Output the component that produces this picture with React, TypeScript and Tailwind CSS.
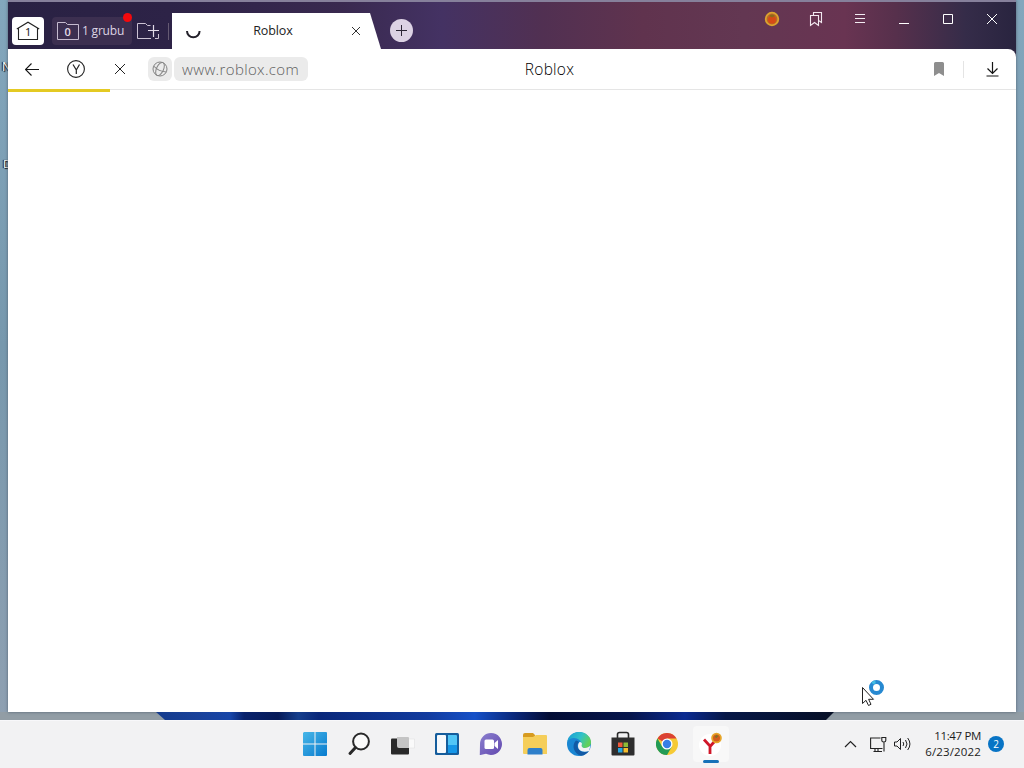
import React from "react";

const sans = "font-['Open_Sans','Noto_Sans',sans-serif]";

const TabStrip: React.FC = () => {
  return (
    <div className="flex h-[49px] w-full border-t-2 border-[#86809b] bg-[linear-gradient(90deg,#292143_0%,#2d2347_16%,#39294f_33%,#443263_43%,#513052_53%,#60334e_63%,#633752_73%,#693452_83%,#57304c_88%,#352c49_95%,#29243f_100%)]">
      <div className="flex pt-[15px] pl-1">
        <button className="flex h-7 w-8 items-center justify-center rounded bg-white">
          <svg className="-mt-px" width="24" height="20" viewBox="0 0 24 20" fill="none" stroke="#222" strokeWidth="1.1">
            <path d="M.8 8 12 1.2 23.2 8M2.5 7v11.5h19V7" />
            <text x="9" y="14.5" fill="#222" stroke="none" fontSize="11" fontFamily="Noto Sans, sans-serif">1</text>
          </svg>
        </button>
        <button className="relative ml-2 flex h-7 w-20 items-center rounded bg-[#3c2f50] pl-[5px] text-[12px] text-[#dcd4e4]">
          <svg width="22" height="18" viewBox="0 0 22 18" fill="none" stroke="#c5bbcf">
            <path d="M.5 17.5V.5h8l2 2h11v15z" />
            <text x="7.5" y="13.5" fill="#e4dde9" stroke="none" fontSize="11" fontWeight="600" fontFamily="Open Sans, sans-serif">0</text>
          </svg>
          <span className="ml-[3px] whitespace-nowrap tracking-[-0.2px]">1 grubu</span>
          <span className="absolute -top-[4px] right-0 size-[9px] rounded-full bg-[#f4090d]" />
        </button>
        <button className="ml-[5px] flex h-7 w-6 items-center">
          <svg width="23" height="18" viewBox="0 0 23 18" fill="none" stroke="#cbc2d3">
            <path d="M14 16.5H.5v-15h8l2 2h3M21.5 12v4.5H18" />
            <path d="M16.5 3v12M11 8.5h11" stroke="#e2dbe8" strokeWidth="1.2" />
          </svg>
        </button>
        <span className="mt-[6px] ml-[7px] h-[17px] w-px bg-[#655a73]" />
      </div>

      <div className="mt-[11px] ml-[3px] flex h-9 w-[209px] items-center bg-white pl-[13px] text-[#222] [clip-path:polygon(0_0,198px_0,209px_100%,0_100%)]">
        <svg width="17" height="17" viewBox="0 0 17 17" fill="none" stroke="#24212b" strokeWidth="2">
          <path d="M2 8a6.3 6.3 0 0 0 12.6 0" />
        </svg>
        <span className="w-[127px] pl-[15px] pt-px text-center text-[12.5px] tracking-[-0.1px]">Roblox</span>
        <svg className="ml-[22px]" width="10" height="10" viewBox="0 0 10 10" stroke="#333">
          <path d="m1 1 8 8M9 1 1 9" />
        </svg>
      </div>
      <button className="mt-[17px] ml-[9px] flex size-[23px] items-center justify-center rounded-full bg-[#dcd2e4]">
        <svg width="11" height="11" viewBox="0 0 11 11" stroke="#2b2535">
          <path d="M5.5 0v11M0 5.5h11" />
        </svg>
      </button>

      <div className="ml-auto flex h-[34px] pr-[2px] text-white [&>span]:flex [&>span]:w-11 [&>span]:items-center [&>span]:justify-center">
        <span>
          <svg width="16" height="16" viewBox="0 0 16 16">
            <circle cx="8" cy="8" r="6.3" fill="#b8692a" stroke="#dca32e" strokeWidth="1.8" />
            <circle cx="8" cy="8.7" r="3.9" fill="#d64a15" />
            <path d="M5 5c2-2 4-2 6 0L8 6.5z" fill="#8a6b18" />
          </svg>
        </span>
        <span>
          <svg width="14" height="16" viewBox="0 0 14 16" fill="none" stroke="#f2e9f0">
            <path d="M4.5 4.5v-3h8v10L10 9.8M1.5 4.5h8v10l-4-3-4 3z" strokeWidth="1.1" />
          </svg>
        </span>
        <span>
          <svg width="10" height="10" viewBox="0 0 10 10" stroke="#f3ebf2">
            <path d="M0 .5h10M0 4.5h10M0 8.5h10" />
          </svg>
        </span>
        <span>
          <svg width="10" height="10" viewBox="0 0 10 10" stroke="#fff">
            <path d="M0 9.5h10" />
          </svg>
        </span>
        <span>
          <svg width="10" height="10" viewBox="0 0 10 10" fill="none" stroke="#fff">
            <path d="M.5.5h9v9h-9z" />
          </svg>
        </span>
        <span>
          <svg width="10" height="10" viewBox="0 0 10 10" stroke="#fff">
            <path d="m0 0 10 10m0-10L0 10" />
          </svg>
        </span>
      </div>
    </div>
  );
};

const Toolbar: React.FC = () => {
  return (
    <div className="bg-[#2b2540]">
      <div className="flex h-[41px] items-center rounded-tr-lg border-b border-[#e5e5e5] bg-white">
        <div className="flex w-[504px] items-center pl-[2px]">
          <button className="flex w-11 justify-center">
            <svg width="14" height="13" viewBox="0 0 14 13" fill="none" stroke="#151515" strokeWidth="1.1">
              <path d="m6.5.5-6 6 6 6M.5 6.5H14" />
            </svg>
          </button>
          <button className="flex w-11 justify-center">
            <svg width="18" height="18" viewBox="0 0 18 18" fill="none" stroke="#222">
              <circle cx="9" cy="9" r="8.4" strokeWidth="1.1" />
              <path d="m6 4.500 3.300 5.500v4M12.500 4.500 9.300 10" strokeWidth="1.2" />
            </svg>
          </button>
          <button className="flex w-11 justify-center">
            <svg width="10" height="10" viewBox="0 0 10 10" stroke="#222">
              <path d="m0 0 10 10m0-10L0 10" />
            </svg>
          </button>
          <span className="ml-[6px] flex size-6 items-center justify-center rounded-md bg-[#ebebeb]">
            <svg width="16" height="16" viewBox="0 0 16 16" fill="none" stroke="#858585">
              <circle cx="8" cy="8" r="7" />
              <g transform="rotate(25 8 8)">
                <ellipse cx="8" cy="8" rx="3.5" ry="7" />
                <path d="M1 8q7 3 14 0" />
              </g>
            </svg>
          </span>
          <span className="ml-[2px] flex h-6 w-[134px] items-center rounded-md bg-[#ebebeb] pl-2 text-[15px] font-light tracking-[0.36px] text-[#606060]">
            www.roblox.com
          </span>
        </div>
        <span className="w-[75px] pt-[2px] text-center text-[15.5px] font-light tracking-[0.25px] text-black">Roblox</span>
        <div className="flex flex-1 items-center justify-end pr-[17px]">
          <svg width="10" height="14" viewBox="0 0 10 14" fill="#8e8e8e">
            <path d="M0 1.5Q0 0 1.5 0h7Q10 0 10 1.5V14l-5-3-5 3z" />
          </svg>
          <span className="ml-[19px] h-[17px] w-px bg-[#e4e4e4]" />
          <svg className="ml-[22px]" width="13" height="16" viewBox="0 0 13 16" fill="none" stroke="#151515" strokeWidth="1.2">
            <path d="M6.5 1v11M1.5 7.500l5 5 5-5M.5 15h12" />
          </svg>
        </div>
      </div>
    </div>
  );
};

const Taskbar: React.FC = () => {
  return (
    <div className="flex h-12 w-full border-t border-[#f8f8fa] bg-[#f2f2f3] pb-px">
      <div className="ml-[293px] flex items-center [&>span]:flex [&>span]:h-11 [&>span]:w-11 [&>span]:items-center [&>span]:justify-center">
        <span>
          <svg width="24" height="24" viewBox="0 0 24 24">
            <defs>
              <linearGradient id="start" gradientUnits="userSpaceOnUse" x1="0" y1="0" x2="24" y2="24">
                <stop stopColor="#48b7e8" />
                <stop offset="1" stopColor="#087bce" />
              </linearGradient>
            </defs>
            <path d="M1 0h10.500v11.500H0V1zM12.500 0H23q1 0 1 1v10.500H12.500zM0 12.500h11.500V24H1q-1 0-1-1zM12.500 12.500H24V23q0 1-1 1H12.500z" fill="url(#start)" />
          </svg>
        </span>
        <span>
          <svg width="24" height="24" viewBox="0 0 24 24" fill="none" stroke="#292929">
            <circle cx="14" cy="9.5" r="7.9" fill="#fafafa" strokeWidth="2" />
            <path d="m8.500 15.500-5.500 6" strokeWidth="3" strokeLinecap="round" />
          </svg>
        </span>
        <span>
          <svg width="24" height="24" viewBox="0 0 24 24">
            <path d="M12 7h11.500v9H12z" fill="#fafafa" stroke="#ddd" strokeWidth=".5" />
            <rect y="6.5" width="18" height="16" rx="1" fill="#292929" />
            <path d="M6 5h11q1 0 1 1v10H8q-2 0-2-2z" fill="#c4c4c4" />
          </svg>
        </span>
        <span>
          <svg width="24" height="22" viewBox="0 0 24 22">
            <rect width="24" height="22" rx="1.5" fill="#155d9c" />
            <rect x="2" y="2" width="9" height="18" rx="1" fill="#f6f9fc" />
            <path d="M13 2h8q1 0 1 1v9h-9z" fill="#51c6f7" />
            <path d="M13 12h9v7q0 1-1 1h-8z" fill="#1597e8" />
          </svg>
        </span>
        <span>
          <svg width="24" height="24" viewBox="0 0 24 24">
            <defs>
              <linearGradient id="chat" x1="0" y1="0" x2="1" y2="1">
                <stop stopColor="#8b80cf" />
                <stop offset="1" stopColor="#6248ae" />
              </linearGradient>
            </defs>
            <path d="M12 1a11 11 0 1 1-5 20.800L1.500 23q-1 0-.7-1L1 12A11 11 0 0 1 12 1z" fill="url(#chat)" />
            <rect x="5.5" y="7.5" width="9.5" height="9.5" rx="1.5" fill="#fff" />
            <path d="m15.500 11 3.500-3v9l-3.500-3z" fill="#fff" />
          </svg>
        </span>
        <span>
          <svg width="24" height="22" viewBox="0 0 24 22">
            <path d="M0 2Q0 0 2 0h8l2 2v4H0z" fill="#d79b20" />
            <path d="M0 4h10l3-2h10q1 0 1 1v18H1q-1 0-1-1z" fill="#f5ce5a" />
            <path d="M4.500 21.500V17q0-2 2-2h11q2 0 2 2v4.500z" fill="#2e7fca" />
          </svg>
        </span>
        <span>
          <svg width="24" height="24" viewBox="0 0 24 24">
            <defs>
              <linearGradient id="edgeTop" x1="0" y1="0" x2="1" y2=".4">
                <stop stopColor="#159cd7" />
                <stop offset=".6" stopColor="#31c2c8" />
                <stop offset="1" stopColor="#61d05a" />
              </linearGradient>
            </defs>
            <circle cx="12" cy="12" r="12" fill="#1a86d2" />
            <path d="M.2 10C1.500 4 6 0 12 0c7 0 12 5 12 10 0 4-3 6-6.500 6-3 0-4-1-3-3C15 9 11 6 7 6 4 6 1.500 7.500.2 10z" fill="url(#edgeTop)" />
            <path d="M9 8.500c-5 5-2 13 5 15.300 4-.5 6-2.500 8-4.800-5 2-9 1-11-3-1-2-1-4 1-6-1-1-2-1.500-3-1.500z" fill="#125aa5" />
            <path d="M15 12c-1 2 0 4 3 4 2 0 4-1 5.500-2.500L22 19c-7 2-11-1-11-5 0-2 1-4 2-4 1 0 2 1 2 2z" fill="#f2f2f3" />
          </svg>
        </span>
        <span>
          <svg width="24" height="26" viewBox="0 0 24 26">
            <path d="M6.500 7V3.500q0-2 2-2h7q2 0 2 2V7" fill="none" stroke="#292929" strokeWidth="1.6" />
            <path d="M.5 6.500h23v17q0 1-1 1h-21q-1 0-1-1z" fill="#2e2e2e" />
            <path d="M7 11.500h4.500V16H7z" fill="#ef593a" />
            <path d="M12.500 11.500H17V16h-4.500z" fill="#8dbb37" />
            <path d="M7 17h4.500v4.500H7z" fill="#25a8e4" />
            <path d="M12.500 17H17v4.500h-4.500z" fill="#f5bd2e" />
          </svg>
        </span>
        <span>
          <svg width="22" height="22" viewBox="0 0 24 24">
            <circle cx="12" cy="12" r="12" fill="#f6ca35" />
            <path d="M12 12 1.600 6A12 12 0 0 1 22.400 6H12z" fill="#db4234" />
            <path d="M1.600 6A12 12 0 0 0 12 24l5.200-9H6.800z" fill="#229b56" />
            <circle cx="12" cy="12" r="6" fill="#fff" />
            <circle cx="12" cy="12" r="4.6" fill="#367fe5" />
          </svg>
        </span>
        <span className="relative">
          <span className="flex size-9 items-center justify-center rounded bg-[#f8f8f8]">
            <svg width="30" height="30" viewBox="0 0 30 30">
              <circle cx="14" cy="16" r="11" fill="#fff" />
              <path d="m8 10.500 6 6.500v8M14 17.500l4.500-5" fill="none" stroke="#d01729" strokeWidth="2.8" />
              <circle cx="20.5" cy="9" r="5.3" fill="#e6a528" />
              <circle cx="20.5" cy="9" r="3.5" fill="#d45c1d" />
              <path d="m18.500 8 2-2 2 1-2 2z" fill="#7c7428" />
            </svg>
          </span>
          <span className="absolute bottom-[3px] h-[3px] w-4 rounded-full bg-[#1671b8]" />
        </span>
      </div>

      <div className="ml-auto flex items-center pr-5 text-[#1c1c1c]">
        <svg width="13" height="8" viewBox="0 0 13 8" fill="none" stroke="#222" strokeWidth="1.2">
          <path d="m1 7 5.500-5.500L12 7" />
        </svg>
        <svg className="ml-[13px]" width="17" height="17" viewBox="0 0 17 17" fill="none" stroke="#222" strokeWidth="1.1">
          <path d="M10.500 2H.6v10.500h11.900M5 12.500v3M8 12.500v3M3.500 15.500h8.500M14 6v9.500M11.800 1.500h4V4.500q0 1.500-2 1.500t-2-1.500z" />
        </svg>
        <svg className="ml-[7px]" width="17" height="14" viewBox="0 0 17 14" fill="none" stroke="#222">
          <path d="M.5 5h2.500l3.500-3.500v11L3 9H.5zM9 5q1.500 2 0 4M11.500 3q3 4 0 8M13.700 1q4.500 6 0 12" />
        </svg>
        <div className="mb-px ml-[9px] w-[61px] whitespace-nowrap text-right text-[11.5px] leading-4">
          <p className="tracking-[-0.35px]">11:47 PM</p>
          <p className="tracking-[0.15px]">6/23/2022</p>
        </div>
        <span className="ml-[7px] flex size-4 items-center justify-center rounded-full bg-[#0874c5] text-[10px] text-white">
          2
        </span>
      </div>
    </div>
  );
};

const App: React.FC = () => {
  return (
    <div className={`relative flex h-[768px] w-[1024px] flex-col overflow-hidden bg-[linear-gradient(180deg,#83a7bd_0%,#7798ad_45%,#92a1b2_100%)] ${sans}`}>
      {/* Desktop labels peeking out from behind the window */}
      <span className="absolute top-[58px] left-[2px] text-[12px] text-white [text-shadow:1px_1px_1px_#000,-1px_0_1px_#000]">N</span>
      <span className="absolute top-[156px] left-[3px] text-[11px] text-white [text-shadow:1px_1px_1px_#000,-1px_0_1px_#000]">D</span>

      <div className="relative ml-2 flex h-[712px] w-[1008px] shrink-0 flex-col bg-white shadow-[0_0_3px_#526272]">
        <TabStrip />
        <Toolbar />
        <div className="-mt-px h-[3px] w-[102px] bg-[#e4ca23]" />
      </div>

      <div className="h-2 shrink-0 bg-[#929da5]">
        <div className="ml-[156px] h-full w-[678px] bg-[linear-gradient(90deg,#153c8d_0%,#194199_6%,#1745a8_11%,#08226c_13%,#071b59_18%,#153e8c_21%,#09277a_24%,#123b9e_40%,#1550c8_47%,#0a2779_53%,#030d35_58%,#07164c_70%,#0b2b91_78%,#061747_84%,#071026_100%)] [clip-path:polygon(0_0,100%_0,670px_100%,9px_100%)]" />
      </div>
      <Taskbar />

      {/* Busy pointer */}
      <svg className="absolute top-[678px] left-[860px]" width="28" height="30" viewBox="0 0 28 30">
        <path d="M2.500 9.500v16l3.500-3.200 2.500 5.200 2.500-1.200-2.400-5H13.500z" fill="#fff" stroke="#222" />
        <circle cx="16.5" cy="9.5" r="5.5" fill="none" stroke="#2789d1" strokeWidth="4" />
        <path d="M12.500 5.500a5.500 5.500 0 0 1 3-1.500" fill="none" stroke="#42bee4" strokeWidth="3" />
      </svg>
    </div>
  );
};

export default App;
